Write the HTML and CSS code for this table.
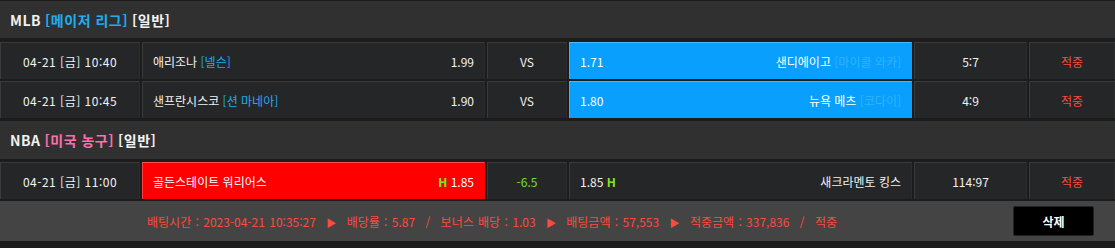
FILE: index.html
```html
<!DOCTYPE html>
<html lang="ko">
<head>
<meta charset="utf-8">
<link rel="stylesheet" href="styles.css">
</head>
<body>
<div class="wrap">
  <div class="league league-first">MLB <span class="lg-mlb">[메이저 리그]</span> [일반]</div>
  <div class="row">
    <div class="cell c-date">04-21 [금] 10:40</div>
    <div class="cell c-home"><span>애리조나 <span class="pitcher">[넬슨]</span></span><span>1.99</span></div>
    <div class="cell c-mid">VS</div>
    <div class="cell c-away sel-blue"><span>1.71</span><span>샌디에이고 <span class="pitcher-b">[마이클 와카]</span></span></div>
    <div class="cell c-mid">5:7</div>
    <div class="cell c-mid hit">적중</div>
  </div>
  <div class="row">
    <div class="cell c-date">04-21 [금] 10:45</div>
    <div class="cell c-home"><span>샌프란시스코 <span class="pitcher">[션 마네아]</span></span><span>1.90</span></div>
    <div class="cell c-mid">VS</div>
    <div class="cell c-away sel-blue"><span>1.80</span><span>뉴욕 메츠 <span class="pitcher-b">[코다이]</span></span></div>
    <div class="cell c-mid">4:9</div>
    <div class="cell c-mid hit">적중</div>
  </div>
  <div class="league">NBA <span class="lg-nba">[미국 농구]</span> [일반]</div>
  <div class="row">
    <div class="cell c-date">04-21 [금] 11:00</div>
    <div class="cell c-home sel-red"><span>골든스테이트 워리어스</span><span><span class="h">H</span> 1.85</span></div>
    <div class="cell c-mid handi">-6.5</div>
    <div class="cell c-away"><span>1.85 <span class="h">H</span></span><span>새크라멘토 킹스</span></div>
    <div class="cell c-mid">114:97</div>
    <div class="cell c-mid hit">적중</div>
  </div>
  <div class="footer">
    <div class="summary">배팅시간 : 2023-04-21 10:35:27 <span class="arrow">▶</span> 배당률 : 5.87 <span class="sep">/</span> 보너스 배당 : 1.03 <span class="arrow">▶</span> 배팅금액 : 57,553 <span class="arrow">▶</span> 적중금액 : 337,836 <span class="sep">/</span> 적중</div>
    <button class="del">삭제</button>
  </div>
</div>
</body>
</html>
```

FILE: styles.css
```css
* { box-sizing: border-box; }
html, body {
  margin: 0;
  padding: 0;
  background: #1c1c1c;
}
body {
  font-family: "Noto Sans CJK KR", "Noto Sans", sans-serif;
  color: #f2f2f2;
  font-size: 12px;
  width: 1115px;
  height: 248px;
  overflow: hidden;
}
.wrap {
  padding-top: 1px;
}
.league {
  height: 38px;
  background: #303030;
  display: flex;
  align-items: center;
  gap: 4px;
  padding-left: 10px;
  font-weight: 700;
  font-size: 14px;
  letter-spacing: 0.5px;
  margin-top: 3px;
  margin-bottom: 3px;
}
.league-first {
  margin-top: 0;
  height: 37px;
  margin-bottom: 4px;
}
.lg-mlb { color: #1eaef0; }
.lg-nba { color: #ff6fae; }
.row {
  display: grid;
  grid-template-columns: 140px 343px 80px 343px 113px 1fr;
  column-gap: 2px;
  height: 37px;
  margin-bottom: 2px;
}
.cell {
  background: #252628;
  border-top: 1px solid #3a3a3a;
  border-left: 1px solid #3a3a3a;
  border-right: 1px solid #2c2c2c;
  display: flex;
  align-items: center;
  white-space: nowrap;
}
.c-date {
  justify-content: center;
  letter-spacing: 0.5px;
}
.c-home, .c-away {
  justify-content: space-between;
  padding: 0 10px 0 10px;
}
.c-mid {
  justify-content: center;
}
.pitcher { color: #1eaef0; }
.pitcher-b { color: #2fb3fb; }
.sel-blue {
  background: #089ffd;
  border-top: 1px solid #46baff;
  border-left: 1px solid #3cb4ff;
  border-right: 1px solid #089ffd;
  color: #ffffff;
}
.sel-red {
  background: #ff0000;
  border-top: 1px solid #ff5050;
  border-left: 1px solid #ff4040;
  border-right: 1px solid #ff0000;
  color: #ffffff;
}
.h {
  color: #7fe81c;
  font-weight: 700;
}
.handi { color: #6fe02a; }
.hit { color: #ff4a3d; }
.footer {
  margin-top: 1px;
  height: 40px;
  background: #444444;
  display: flex;
  align-items: center;
  padding-right: 21px;
}
.summary {
  flex: 1;
  text-align: center;
  color: #ff4a3d;
  font-size: 12px;
  white-space: nowrap;
  word-spacing: 1px;
  padding-right: 8px;
}
.arrow {
  font-size: 10px;
  margin: 0 6px;
}
.sep {
  margin: 0 6px;
}
.del {
  width: 81px;
  height: 30px;
  background: #000000;
  border: 1px solid #222;
  border-radius: 2px;
  color: #ffffff;
  font-family: "Noto Sans CJK KR", sans-serif;
  font-size: 12px;
  font-weight: 700;
  margin-left: 21px;
}
```
